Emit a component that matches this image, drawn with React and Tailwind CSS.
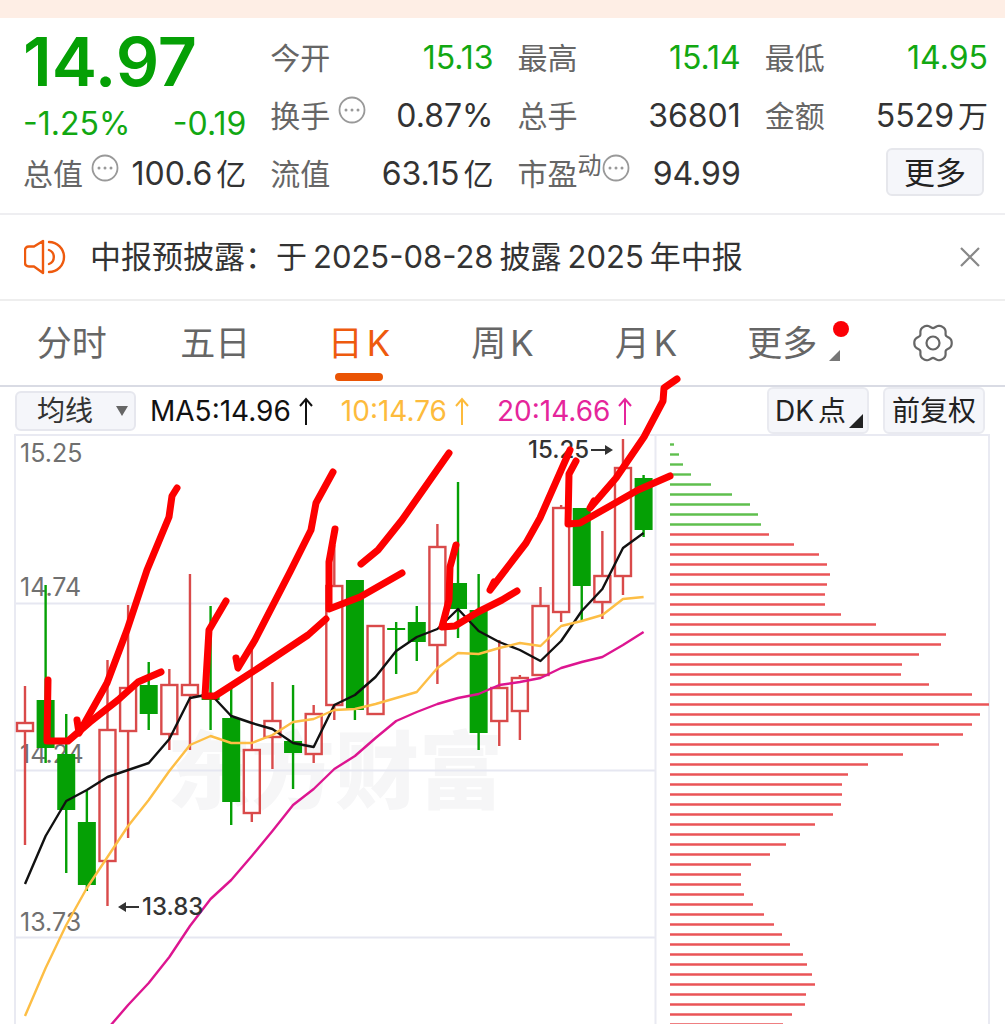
import React from 'react';

const UP = '#d94a4a';
const DOWN = '#05a005';

const TABS = [
  { id: 'fs', han: '分时' },
  { id: 'wr', han: '五日' },
  { id: 'rk', han: '日', latin: 'K', active: true },
  { id: 'zk', han: '周', latin: 'K' },
  { id: 'yk', han: '月', latin: 'K' },
];

// [direction, high, body top, body bottom, low]
const CANDLES = [
  ['up', 686, 723, 731, 845],
  ['down', 585, 700, 748, 763],
  ['down', 714, 754, 810, 873],
  ['down', 791, 822, 885, 891],
  ['up', 660, 730, 861, 906],
  ['up', 605, 688, 731, 838],
  ['down', 662, 685, 714, 730],
  ['up', 669, 685, 734, 750],
  ['up', 574, 685, 695, 750],
  ['down', 606, 694, 700, 730],
  ['down', 686, 718, 802, 825],
  ['up', 645, 750, 813, 822],
  ['up', 682, 721, 737, 769],
  ['down', 685, 741, 753, 789],
  ['up', 705, 714, 754, 763],
  ['up', 545, 586, 705, 720],
  ['down', 580, 580, 710, 720],
  ['up', 626, 626, 714, 714],
  ['down', 622, 628, 630, 674],
  ['down', 606, 622, 642, 661],
  ['up', 524, 547, 645, 684],
  ['down', 482, 583, 609, 638],
  ['down', 574, 610, 733, 750],
  ['up', 640, 688, 721, 746],
  ['up', 675, 678, 711, 740],
  ['up', 587, 606, 675, 675],
  ['up', 505, 508, 612, 622],
  ['down', 508, 508, 586, 621],
  ['up', 531, 576, 602, 619],
  ['up', 439, 468, 576, 595],
  ['down', 475, 478, 530, 537],
];

const MA5 = [884, 836, 801, 790, 777, 770, 763, 739, 698, 694, 716, 723, 729, 743, 747, 705, 695, 677, 651, 637, 629, 609, 631, 642, 650, 661, 641, 611, 589, 548, 533];
const MA10 = [1016, 968, 925, 888, 857, 826, 800, 771, 745, 736, 743, 743, 735, 722, 719, 710, 709, 704, 698, 692, 668, 653, 654, 648, 643, 646, 626, 621, 615, 599, 597];
const MA20 = [1130, 1105, 1080, 1055, 1029, 1005, 983, 957, 926, 899, 880, 856, 831, 805, 789, 769, 756, 738, 721, 712, 704, 698, 694, 685, 682, 678, 668, 662, 657, 645, 632];

// chip distribution, one bar every 10 units
const CHIPS = [4, 9, 13, 21, 41, 62, 80, 88, 91, 99, 124, 149, 157, 160, 157, 155, 155, 171, 206, 276, 271, 249, 232, 231, 259, 302, 319, 310, 302, 293, 269, 233, 198, 178, 172, 172, 171, 163, 145, 130, 116, 100, 81, 71, 71, 74, 83, 94, 104, 112, 120, 133, 137, 142, 145, 136, 135, 122, 113];

const STROKES = [
  '177,488 172,496 169,517 147,570 127,630 107,683 79,733 77,720',
  '48,680 47,741 68,741 90,722 118,700 138,682 161,672',
  '333,472 316,503 311,530 290,572 255,640 238,668 236,658',
  '226,601 209,630 205,696 215,696 260,667 308,635 326,619',
  '449,453 402,520 378,550 361,564',
  '335,529 329,562 329,609 360,597 402,573',
  '570,450 540,518 526,543 490,590 494,582',
  '456,545 450,567 449,600 442,627 455,626 478,612 502,600 517,591',
  '677,379 664,388 663,401 644,437 616,478 590,508 594,501',
  '576,461 569,474 568,524 580,523 610,506 638,490 670,476',
];

const candleX = (i) => 25 + i * 20.62;
const toPoints = (values) => values.map((y, i) => `${candleX(i)},${y}`).join(' ');

// six soft lobes around the centre
const GEAR = Array.from({ length: 120 }, (_, i) => {
  const a = (i * Math.PI) / 60;
  const r = 17.2 + 1.9 * Math.cos(6 * a) - 0.4 * Math.cos(12 * a);
  return `${(20 + r * Math.cos(a)).toFixed(2)},${(20 + r * Math.sin(a)).toFixed(2)}`;
}).join(' ');

function MoreInfo() {
  return (
    <svg viewBox="0 0 28 28" className="h-7 w-7 shrink-0 self-start" fill="none" aria-hidden="true">
      <circle cx="14" cy="14" r="12.5" stroke="#999" strokeWidth="1.8" />
      <circle cx="8" cy="14" r="1.5" fill="#999" />
      <circle cx="14" cy="14" r="1.5" fill="#999" />
      <circle cx="20" cy="14" r="1.5" fill="#999" />
    </svg>
  );
}

function Stat({ label, sup, info, value, unit, green }) {
  return (
    <div className="flex h-[58px] items-center justify-between whitespace-nowrap">
      <dt className="flex h-10 items-center text-[#666]">
        <span>{label}</span>
        {sup && <sup className="top-0 self-start text-2xl leading-6">{sup}</sup>}
        {info && <span className={sup ? 'self-start' : 'ml-2 self-start'}><MoreInfo /></span>}
      </dt>
      <dd className={green ? 'flex items-center gap-1 text-[#12a812]' : 'flex items-center gap-1 text-[#333]'}>
        <span className="text-[32px]">{value}</span>
        {unit && <span>{unit}</span>}
      </dd>
    </div>
  );
}

function Quote() {
  return (
    <section className="border-b-2 border-[#eeeef1] pt-[11px] pr-[17px] pb-2.5 pl-[23px] text-3xl">
      <dl className="grid grid-cols-4 gap-x-6">
        <div>
          <div className="flex h-[58px] items-center pt-1.5 text-[68px] leading-none font-semibold text-[#05a005]">14.97</div>
          <div className="flex h-[58px] items-center justify-between pt-4 text-[32px] text-[#12a812]">
            <span>-1.25%</span>
            <span>-0.19</span>
          </div>
          <Stat label="总值" info value="100.6" unit="亿" />
        </div>
        <div>
          <Stat label="今开" value="15.13" green />
          <Stat label="换手" info value="0.87%" />
          <Stat label="流值" value="63.15" unit="亿" />
        </div>
        <div>
          <Stat label="最高" value="15.14" green />
          <Stat label="总手" value="36801" />
          <Stat label="市盈" sup="动" info value="94.99" />
        </div>
        <div>
          <Stat label="最低" value="14.95" green />
          <Stat label="金额" value="5529" unit="万" />
          <div className="flex h-[58px] items-center justify-end pr-1 pb-1">
            <button className="h-12 rounded-md border-2 border-[#e6e7ec] bg-[#f5f6fa] px-4 text-[31px] leading-none text-[#222]">更多</button>
          </div>
        </div>
      </dl>
    </section>
  );
}

function Notice() {
  return (
    <section className="flex h-[86px] items-center border-b-2 border-[#eeeeee] pr-6 pl-6 text-[31px] text-[#333]">
      <svg viewBox="0 0 42 36" className="h-9 w-[42px] shrink-0" fill="none" stroke="#ee5a0e" strokeWidth="2.4" strokeLinecap="round" strokeLinejoin="round" aria-hidden="true">
        <path d="M19 2v32l-9-6.500H5q-4 0-4-4v-12q0-4 4-4h5z" />
        <path d="M25 3a15 15 0 0 1 0 30" />
        <path d="M25 11a7.500 7.500 0 0 1 0 14" />
      </svg>
      <p className="ml-6 flex gap-1.5 whitespace-nowrap">
        <span>中报预披露：于</span>
        <span>2025-08-28</span>
        <span>披露</span>
        <span>2025</span>
        <span>年中报</span>
      </p>
      <button aria-label="关闭" className="ml-auto">
        <svg viewBox="0 0 22 22" className="h-[22px] w-[22px]" stroke="#888" strokeWidth="2.2" aria-hidden="true">
          <path d="M2 2l18 18M20 2L2 20" />
        </svg>
      </button>
    </section>
  );
}

function Tabs() {
  return (
    <nav className="grid h-[86px] grid-cols-7 border-b-2 border-[#d9dbe4] text-[35px] text-[#666]">
      {TABS.map((tab) => (
        <button
          key={tab.id}
          className={tab.active ? 'relative flex items-center justify-center gap-1 text-[#ee5a0e]' : 'flex items-center justify-center gap-1'}
        >
          <span>{tab.han}</span>
          {tab.latin && <span>{tab.latin}</span>}
          {tab.active && <span className="absolute bottom-1 h-2 w-12 rounded-full bg-[#ea5404]" />}
        </button>
      ))}
      <button className="relative flex items-center justify-center gap-3 pl-2">
        <span>更多</span>
        <svg viewBox="0 0 11 11" className="mt-6 h-[11px] w-[11px]" fill="#777" aria-hidden="true">
          <path d="M11 0v11H0z" />
        </svg>
        <span className="absolute top-5 right-3 h-4 w-4 rounded-full bg-[#fb0006]" />
      </button>
      <button aria-label="设置" className="flex items-center justify-center">
        <svg viewBox="0 0 40 40" className="h-10 w-10" fill="none" stroke="#666" strokeWidth="2.2" strokeLinejoin="round" aria-hidden="true">
          <polygon points={GEAR} />
          <circle cx="20" cy="20" r="6.500" />
        </svg>
      </button>
    </nav>
  );
}

function Average({ children, className }) {
  return (
    <span className={className}>
      {children}
      <svg viewBox="0 0 14 28" className="h-7 w-3.5" fill="none" stroke="currentColor" strokeWidth="2" aria-hidden="true">
        <path d="M7 28V2M1 9l6-7 6 7" />
      </svg>
    </span>
  );
}

function Toolbar() {
  return (
    <div className="flex h-[47px] items-center pr-5 pl-[15px] text-[28px] whitespace-nowrap">
      <label className="relative flex items-center">
        <select aria-label="指标" className="h-10 w-[121px] appearance-none rounded-md border-2 border-[#e6e7ee] bg-[#f5f6fa] pl-5 leading-9 text-[#333]">
          <option>均线</option>
        </select>
        <svg viewBox="0 0 12 10" className="pointer-events-none absolute right-2 h-2.5 w-3" fill="#666" aria-hidden="true">
          <path d="M0 0h12L6 10z" />
        </svg>
      </label>
      <Average className="ml-3.5 flex items-center gap-2 text-[#111]">MA5:14.96</Average>
      <Average className="ml-7 flex items-center gap-2 text-[#fdbb3c]">10:14.76</Average>
      <Average className="ml-7 flex items-center gap-2 text-[#e5259b]">20:14.66</Average>
      <div className="ml-auto flex gap-3.5 text-[#222]">
        <button className="relative flex h-[47px] w-[102px] items-center gap-1 rounded-md border-2 border-[#e9eaf0] bg-[#f5f6fa] pl-1.5">
          <span>DK</span>
          <span>点</span>
          <svg viewBox="0 0 14 14" className="absolute right-1 bottom-1 h-3.5 w-3.5" fill="#222" aria-hidden="true">
            <path d="M14 0v14H0z" />
          </svg>
        </button>
        <button className="h-[47px] w-[102px] rounded-md border-2 border-[#e9eaf0] bg-[#f5f6fa]">前复权</button>
      </div>
    </div>
  );
}

function Candle({ index, data }) {
  const [dir, high, top, bottom, low] = data;
  const x = candleX(index);
  const color = dir === 'up' ? UP : DOWN;
  return (
    <g stroke={color} strokeWidth="2.4">
      <path d={`M${x} ${high}V${top}M${x} ${bottom}V${low}`} />
      {dir === 'up' ? (
        <rect x={x - 8} y={top} width="16" height={bottom - top} fill="none" />
      ) : (
        <rect x={x - 9} y={top} width="18" height={bottom - top} fill={color} stroke="none" />
      )}
    </g>
  );
}

function Chart() {
  return (
    <div className="relative">
      <svg viewBox="0 434 1005 590" className="block w-full font-[Inter,'Noto_Sans_CJK_SC',sans-serif]" fill="none">
        <text x="335" y="802" textAnchor="middle" fontSize="84" fontWeight="900" fill="#f6f6f7">东方财富</text>
        <path d="M15 603.500H655M15 770.500H655M15 937.500H655" stroke="#e6e7f1" strokeWidth="2" />
        <path d="M15 1024V435H989V1024M655.500 435V1024" stroke="#e9eaf2" strokeWidth="2" />

        <g fontSize="25" fill="#707070">
          <text x="20" y="462">15.25</text>
          <text x="20" y="596">14.74</text>
          <text x="20" y="763">14.24</text>
          <text x="20" y="931">13.73</text>
        </g>

        {CANDLES.map((data, i) => <Candle key={i} index={i} data={data} />)}

        <g strokeWidth="2.400" strokeLinejoin="round">
          <polyline points={toPoints(MA5)} stroke="#111" />
          <polyline points={toPoints(MA10)} stroke="#fdbe45" />
          <polyline points={toPoints(MA20)} stroke="#dd1590" />
        </g>

        {CHIPS.map((length, i) => (
          <path key={i} d={`M670 ${444.5 + i * 10}h${length}`} stroke={i < 9 ? '#5fbf4e' : '#ea5457'} strokeWidth="2.400" />
        ))}

        <g fontSize="24" fontWeight="500" fill="#333">
          <text x="528" y="458">15.25</text>
          <text x="142" y="915">13.83</text>
          <path d="M591 450h17M122 907h17" stroke="#333" strokeWidth="2" />
          <path d="M613 450l-8-5v10zM118 907l8-5v10z" />
        </g>
      </svg>

      {/* hand-drawn marks, they reach up over the toolbar */}
      <svg viewBox="0 434 1005 590" className="pointer-events-none absolute inset-0 h-full w-full overflow-visible" fill="none" aria-hidden="true">
        {STROKES.map((points) => (
          <polyline key={points} points={points} stroke="#fd0000" strokeWidth="7" strokeLinecap="round" strokeLinejoin="round" />
        ))}
      </svg>
    </div>
  );
}

export default function App() {
  return (
    <main className="w-full overflow-hidden bg-white font-[Inter,'Noto_Sans_CJK_SC',sans-serif]">
      <div className="h-[18px] bg-[#feeee5]" />
      <Quote />
      <Notice />
      <Tabs />
      <Toolbar />
      <Chart />
    </main>
  );
}
